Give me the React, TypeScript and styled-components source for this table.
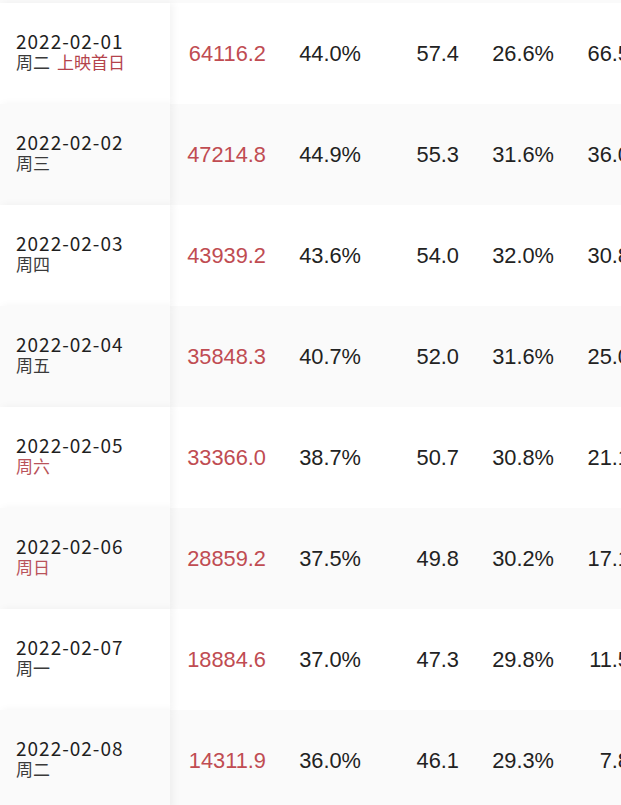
import React from 'react';
import styled, { createGlobalStyle } from 'styled-components';

interface IDay {
  date: string;
  weekday: string;
  weekend?: boolean;
  note?: string;
  boxOffice: string;
  share: string;
  price: string;
  seats: string;
  extra: string;
}

const days: IDay[] = [
  { date: '2022-02-01', weekday: '周二', note: '上映首日', boxOffice: '64116.2', share: '44.0%', price: '57.4', seats: '26.6%', extra: '66.5' },
  { date: '2022-02-02', weekday: '周三', boxOffice: '47214.8', share: '44.9%', price: '55.3', seats: '31.6%', extra: '36.0' },
  { date: '2022-02-03', weekday: '周四', boxOffice: '43939.2', share: '43.6%', price: '54.0', seats: '32.0%', extra: '30.8' },
  { date: '2022-02-04', weekday: '周五', boxOffice: '35848.3', share: '40.7%', price: '52.0', seats: '31.6%', extra: '25.0' },
  { date: '2022-02-05', weekday: '周六', weekend: true, boxOffice: '33366.0', share: '38.7%', price: '50.7', seats: '30.8%', extra: '21.1' },
  { date: '2022-02-06', weekday: '周日', weekend: true, boxOffice: '28859.2', share: '37.5%', price: '49.8', seats: '30.2%', extra: '17.1' },
  { date: '2022-02-07', weekday: '周一', boxOffice: '18884.6', share: '37.0%', price: '47.3', seats: '29.8%', extra: '11.5' },
  { date: '2022-02-08', weekday: '周二', boxOffice: '14311.9', share: '36.0%', price: '46.1', seats: '29.3%', extra: '7.8' }
];

const GlobalStyle = createGlobalStyle`
  html, body {
    margin: 0;
    padding: 0;
    background: #fff;
    overflow: hidden;
  }
`;

const Table = styled.div`
  padding-top: 3px;
  background: #fafafa;
  width: 646px;
`;

const Row = styled.div<{ $striped: boolean }>`
  display: grid;
  grid-template-columns: 170px 112px 95px 98px 95px 76px;
  height: 101px;
  background: ${({ $striped }) => ($striped ? '#fafafa' : '#fff')};
`;

const DateCell = styled.div`
  position: relative;
  z-index: 1;
  display: flex;
  flex-direction: column;
  justify-content: center;
  padding-left: 16px;
  padding-bottom: 6px;
  background: inherit;
  box-shadow: 3px 0 8px rgba(0, 0, 0, 0.05);
  font-family: 'Noto Sans CJK SC', sans-serif;
`;

const DateText = styled.div`
  font-size: 19px;
  line-height: 22px;
  letter-spacing: 1px;
  color: #1f1f1f;
`;

const Weekday = styled.div<{ $weekend?: boolean }>`
  font-size: 17px;
  line-height: 20px;
  color: ${({ $weekend }) => ($weekend ? '#b9535a' : '#3a3a3a')};
`;

const Note = styled.span`
  margin-left: 7px;
  color: #b4434c;
`;

const Value = styled.div<{ $red?: boolean }>`
  display: flex;
  align-items: center;
  justify-content: flex-end;
  padding-right: 16px;
  font-family: 'Liberation Sans', Arial, sans-serif;
  font-size: 21.8px;
  color: ${({ $red }) => ($red ? '#c04c52' : '#222')};
  white-space: nowrap;
`;

const App: React.FC = () => (
  <>
    <GlobalStyle />
    <Table>
      {days.map((day, i) => (
        <Row key={day.date} $striped={i % 2 === 1}>
          <DateCell>
            <DateText>{day.date}</DateText>
            <Weekday $weekend={day.weekend}>
              {day.weekday}
              {day.note && <Note>{day.note}</Note>}
            </Weekday>
          </DateCell>
          <Value $red>{day.boxOffice}</Value>
          <Value>{day.share}</Value>
          <Value>{day.price}</Value>
          <Value>{day.seats}</Value>
          <Value>{day.extra}</Value>
        </Row>
      ))}
    </Table>
  </>
);

export default App;
